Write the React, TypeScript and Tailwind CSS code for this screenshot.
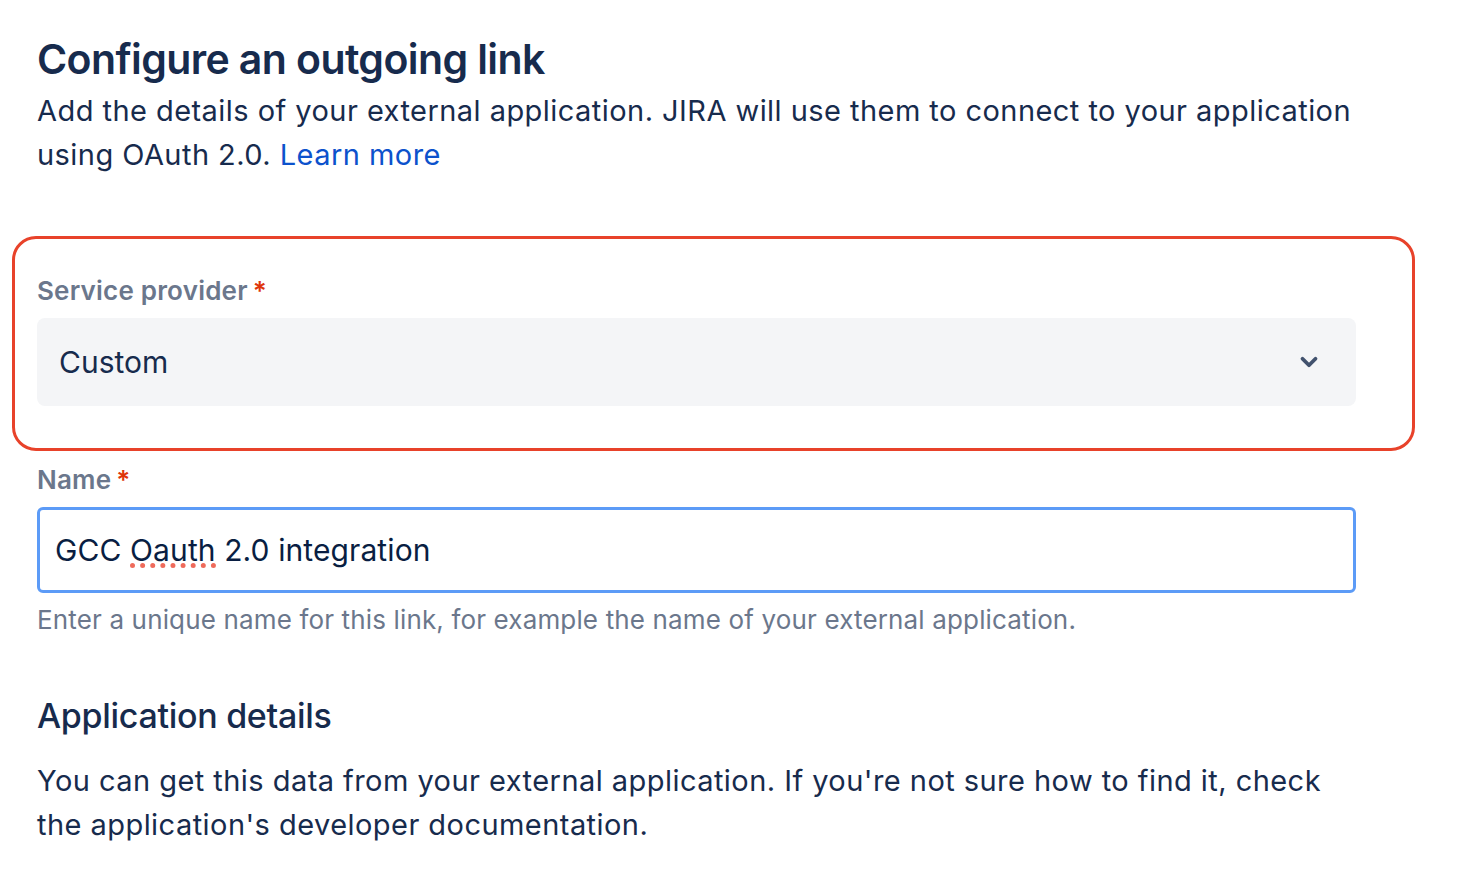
import { ChevronDown } from "lucide-react";

const font = { fontFamily: "Inter, 'Noto Sans', sans-serif" };

function Label({ text }: { text: string }) {
    return (
        <div className="flex items-start text-[26px] leading-[30px] font-semibold tracking-[0.2px] text-[#6b778c]">
            <span>{text}</span>
            <span className="ml-[5px] text-[#de350b]">*</span>
        </div>
    );
}

export default function App() {
    return (
        <div className="min-h-screen bg-white text-[#172b4d]" style={font}>
            <div className="w-[1319px] pl-[37px] pt-[34px] box-content">
                <h1 className="text-[41px] leading-[50px] font-semibold tracking-[-0.6px]">
                    Configure an outgoing link
                </h1>
                <p className="text-[29px] leading-[44px] tracking-[0.45px] mt-[5px] whitespace-nowrap">
                    Add the details of your external application. JIRA will use them to connect to your application
                    <br />
                    using OAuth 2.0. <a className="text-[#0c52cc]">Learn more</a>
                </p>

                <div className="mt-[59px] -ml-[25px] w-[1403px] rounded-[24px] border-[3px] border-[#e8422a] pl-[22px] pr-[56px] pt-[37px] pb-[42px]">
                    <Label text="Service provider" />
                    <div className="mt-[12px] h-[88px] rounded-[8px] bg-[#f4f5f7] flex items-center pl-[22px] pr-[34px]">
                        <span className="flex-1 text-[30px]">Custom</span>
                        <ChevronDown className="w-[26px] h-[26px] text-[#42526e]" strokeWidth={3.5} />
                    </div>
                </div>

                <div className="mt-[14px]">
                    <Label text="Name" />
                    <div className="mt-[12px] h-[86px] rounded-[6px] border-[3px] border-[#5c9bf7] flex items-center pl-[15px]">
                        <span className="text-[30px] tracking-[0.1px] text-[#091e42]">
                            GCC{" "}
                            <span className="relative">
                                Oauth
                                <span className="absolute left-0 right-0 bottom-[0px] h-0 border-b-[5px] border-dotted border-[#ef6b5b]" />
                            </span>{" "}
                            2.0 integration
                        </span>
                    </div>
                    <p className="mt-[10px] text-[26px] leading-[34px] tracking-[0.15px] text-[#6b778c]">
                        Enter a unique name for this link, for example the name of your external application.
                    </p>
                </div>

                <h2 className="mt-[57px] text-[34px] leading-[44px] font-medium tracking-[-0.3px]">
                    Application details
                </h2>
                <p className="mt-[21px] text-[29px] leading-[44px] tracking-[0.45px] whitespace-nowrap">
                    You can get this data from your external application. If you're not sure how to find it, check
                    <br />
                    the application's developer documentation.
                </p>
            </div>
        </div>
    );
}
